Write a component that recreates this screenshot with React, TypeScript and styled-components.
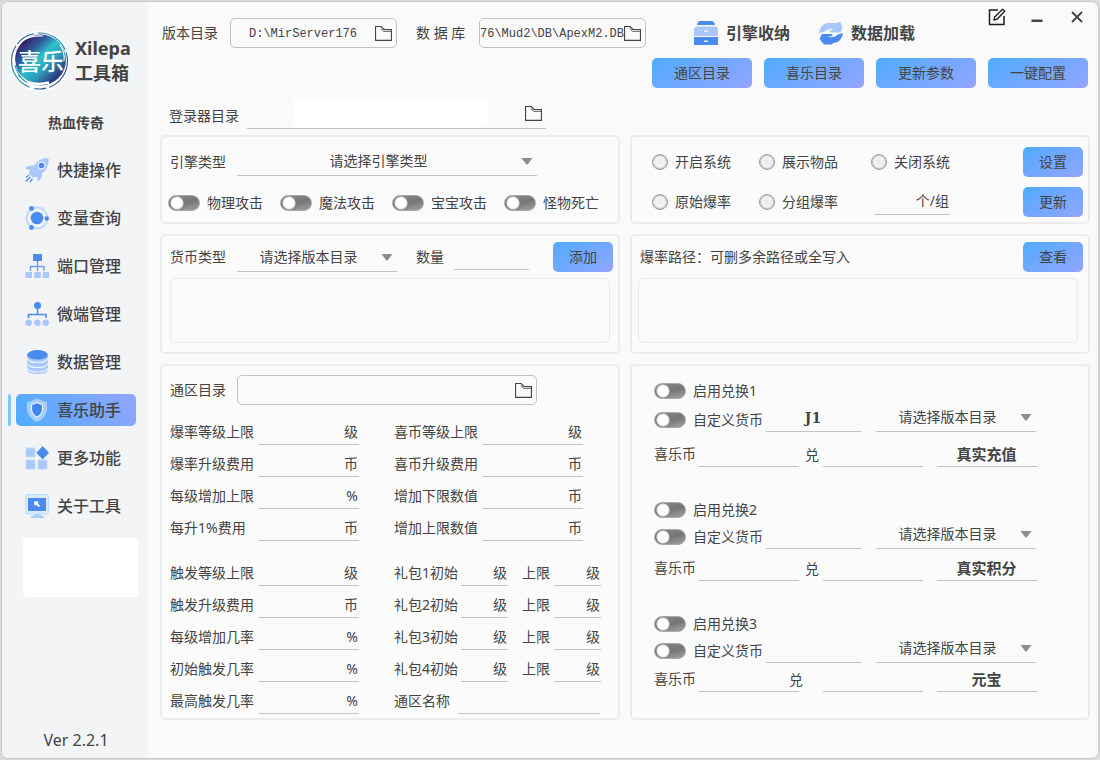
import React, { useId } from "react";
import styled, { createGlobalStyle, css } from "styled-components";

const ink = "#444444";
const line = "#c2c2c2";
const accent = "linear-gradient(150deg, #4facfe 0%, #72a8fe 50%, #93a5fe 100%)";

const GlobalStyle = createGlobalStyle`
  *, *::before, *::after { box-sizing: border-box; }
  body {
    margin: 0;
    padding: 2px;
    background: #dedede;
    color: ${ink};
    font-family: "Noto Sans", "Noto Sans CJK SC", sans-serif;
    font-size: 14px;
    line-height: 24px;
  }
  button, input, select, textarea {
    font: inherit;
    color: inherit;
    margin: 0;
    padding: 0;
    border: 0;
    background: none;
    outline-offset: 2px;
  }
  button { cursor: pointer; }
  svg { display: block; flex: none; }
`;

const Window = styled.div`
  display: flex;
  min-height: calc(100vh - 4px);
  border-radius: 6px;
  overflow: hidden;
  background: #fafafa;
  box-shadow: 0 0 2px #9a9a9a;
`;

const Sidebar = styled.aside`
  display: flex;
  flex-direction: column;
  flex: 0 0 146px;
  padding: 29px 0 6px;
  background: #f2f4f6;
`;

const Brand = styled.div`
  display: flex;
  align-items: center;
  gap: 5px;
  padding-left: 8px;
`;

const BrandName = styled.h1`
  margin: 0;
  font-size: 18px;
  line-height: 25px;
  font-weight: 700;
`;

const GameName = styled.p`
  margin: 20px 0 19px;
  padding-left: 2px;
  text-align: center;
  font-weight: 700;
`;

const Nav = styled.nav`
  display: flex;
  flex-direction: column;
  gap: 16px;
`;

const NavItem = styled.div<{ $active?: boolean }>`
  display: flex;
  gap: 5px;
  padding: 0 12px 0 6px;
  &::before {
    content: "";
    width: 3px;
    border-radius: 2px;
    background: ${(p) => (p.$active ? "#7cc8fd" : "transparent")};
  }
`;

const NavButton = styled.button<{ $active?: boolean }>`
  display: flex;
  flex: 1;
  align-items: center;
  gap: 8px;
  height: 32px;
  padding-left: 9px;
  border-radius: 5px;
  font-size: 16px;
  font-weight: 500;
  background: ${(p) =>
    p.$active ? "linear-gradient(60deg, #4facfe 0%, #6fa8fd 50%, #93a5fe 100%)" : "none"};
`;

const BlankCard = styled.div`
  height: 59px;
  margin: 16px 10px 0 21px;
  border-radius: 4px;
  background: #ffffff;
`;

const Version = styled.p`
  margin: auto 0 0;
  padding-left: 2px;
  text-align: center;
  font-size: 16px;
`;

const Main = styled.main`
  flex: 1;
  min-width: 0;
`;

const Header = styled.header`
  display: flex;
  justify-content: space-between;
`;

const PathFields = styled.div`
  display: flex;
  align-items: center;
  gap: 19px;
  height: 30px;
  margin: 16px 0 0 14px;
  white-space: nowrap;
`;

const PathField = styled.div`
  display: flex;
  align-items: center;
  gap: 12px;
`;

const PathLabel = styled.label`
  min-width: 51px;
`;

const PathBox = styled.div<{ $wide?: boolean }>`
  display: flex;
  align-items: center;
  width: ${(p) => (p.$wide ? 300 : 167)}px;
  height: 30px;
  padding-right: 4px;
  border: 1px solid ${line};
  border-radius: 5px;
`;

const PathInput = styled.input`
  flex: 1;
  min-width: 0;
  height: 26px;
  padding-top: 2px;
  text-align: center;
  font-family: "Liberation Mono", monospace;
  font-size: 12px;
`;

const IconButton = styled.button`
  display: grid;
  place-items: center;
`;

const HeaderSide = styled.div`
  display: flex;
  flex-direction: column;
  width: 446px;
`;

const HeaderTools = styled.div`
  display: flex;
  align-items: flex-start;
  height: 56px;
  padding: 0 1px 0 42px;
`;

const ToolButton = styled.button`
  display: flex;
  align-items: center;
  gap: 8px;
  height: 24px;
  margin: 19px 29px 0 0;
  font-size: 16px;
  font-weight: 700;
  white-space: nowrap;
`;

const WindowControls = styled.div`
  display: flex;
  margin-left: auto;
  & > button { width: 40px; height: 30px; }
`;

const HeaderActions = styled.div`
  display: flex;
  gap: 12px;
  padding-right: 10px;
`;

const ActionButton = styled.button<{ $small?: boolean }>`
  flex: ${(p) => (p.$small ? "0 0 60px" : "1")};
  height: 30px;
  border-radius: 5px;
  background: ${accent};
`;

const LoginRow = styled.div`
  display: flex;
  align-items: flex-end;
  gap: 8px;
  margin-top: 11px;
  padding-left: 21px;
  & > label { padding-bottom: 1px; }
`;

const LoginField = styled.div`
  display: flex;
  align-items: center;
  width: 299px;
  height: 30px;
  padding: 0 4px 1px 46px;
  justify-content: space-between;
  border-bottom: 1px solid ${line};
`;

const LoginInput = styled.input`
  width: 195px;
  height: 28px;
  border-radius: 4px;
  background: #ffffff;
`;

const Panels = styled.div`
  display: grid;
  grid-template-columns: 1fr 1fr;
  grid-template-rows: minmax(89px, auto) minmax(120px, auto) minmax(356px, auto);
  gap: 10px;
  padding: 6px 8px 38px 12px;
`;

const Panel = styled.section<{ $pad: string }>`
  padding: ${(p) => p.$pad};
  border: 2px solid #ebecec;
  border-radius: 5px;
  background: #fbfbfb;
  white-space: nowrap;
`;

const Row = styled.div<{ $gap?: number; $top?: number; $end?: boolean; $indent?: boolean }>`
  display: flex;
  align-items: ${(p) => (p.$end ? "flex-end" : "center")};
  gap: ${(p) => p.$gap ?? 0}px;
  margin-top: ${(p) => p.$top ?? 0}px;
  padding-left: ${(p) => (p.$indent ? 2 : 0)}px;
`;

const ComboBox = styled.div<{ $wide?: boolean }>`
  position: relative;
  width: ${(p) => (p.$wide ? 300 : 160)}px;
  height: 29px;
  border-bottom: 1px solid ${line};
  & > svg {
    position: absolute;
    right: 4px;
    top: 11px;
    pointer-events: none;
  }
`;

const Select = styled.select`
  appearance: none;
  width: 100%;
  height: 28px;
  padding-right: 17px;
  text-align: center;
  text-align-last: center;
`;

const SwitchInput = styled.input`
  appearance: none;
  flex: none;
  width: 32px;
  height: 16px;
  border: 1px solid #a9a9a9;
  border-radius: 8px;
  background:
    radial-gradient(circle at 8px 7px, #ffffff 0, #ffffff 5px, #dddddd 6px, #b8b8b800 7px),
    linear-gradient(165deg, #8a8a8a 0%, #767676 50%, #a2a2a2 100%);
`;

const RadioInput = styled.input`
  appearance: none;
  flex: none;
  width: 16px;
  height: 16px;
  border: 1px solid #989ca0;
  border-radius: 50%;
  background: radial-gradient(circle, #e9e9e9 0%, #f5f5f5 50%, #fbfbfb 70%);
  box-shadow: inset 0 0 1px 1px #bcc0c3;
`;

const Choice = styled.label`
  display: flex;
  align-items: center;
  gap: 7px;
`;

const RadioArea = styled.div`
  display: grid;
  grid-template-columns: 107px 112px 1fr 60px;
  row-gap: 10px;
  align-items: center;
`;

const GroupSize = styled.div`
  padding-left: 4px;
`;

const LineField = styled.div<{ $width: number }>`
  display: flex;
  align-items: center;
  flex: none;
  width: ${(p) => p.$width}px;
  height: 25px;
  padding: 0 1px 1px 0;
  border-bottom: 1px solid ${line};
`;

const LineInput = styled.input<{ $tone?: "serif" | "strong" }>`
  flex: 1;
  width: 100%;
  min-width: 0;
  height: 23px;
  text-align: center;
  ${(p) => p.$tone === "serif" && css`font: 700 14px/23px "DejaVu Serif", serif;`}
  ${(p) => p.$tone === "strong" && css`font-size: 15px; font-weight: 700;`}
`;

const Notes = styled.textarea`
  display: block;
  width: 440px;
  max-width: 100%;
  height: 65px;
  margin-top: 6px;
  border: 1px solid #e9eaeb;
  border-radius: 5px;
  resize: none;
`;

const Spread = styled.div`
  display: flex;
  align-items: center;
  gap: 19px;
  & > button { margin-left: auto; }
`;

const PathsLabel = styled.label`
  padding-left: 2px;
`;

const Columns = styled.div`
  display: flex;
  gap: 35px;
  margin-top: 8px;
`;

const Fields = styled.div`
  display: flex;
  flex-direction: column;
`;

const FieldRow = styled.div<{ $apart?: boolean }>`
  display: flex;
  align-items: flex-end;
  height: 32px;
  margin-top: ${(p) => (p.$apart ? 13 : 0)}px;
`;

const FieldLabel = styled.label<{ $width: number }>`
  flex: none;
  width: ${(p) => p.$width}px;
  padding-bottom: 1px;
`;

const Exchange = styled.fieldset`
  min-width: 0;
  margin: 0;
  padding: 0;
  border: 0;
`;

const ExchangeHead = styled.div`
  display: flex;
  align-items: center;
  height: 20px;
`;

const Stack = styled.div`
  display: flex;
  flex-direction: column;
  gap: 33px;
`;

const RateWord = styled.span<{ $early?: boolean }>`
  flex: none;
  width: 24px;
  padding-left: 6px;
  ${(p) => p.$early && css`margin-left: -16px; margin-right: 16px;`}
`;

const Tail = styled.div`
  margin-left: 14px;
`;

/* ---------- icons ---------- */

const deep = "#4a8bf0";
const pale = "#a9c7fb";

const FolderIcon = () => (
  <svg width="17" height="15" viewBox="0 0 17 15" fill="none" stroke="#444">
    <path d="M.5 14.300V.5H6l3 3h7.500v10.800z" strokeWidth="1.200" />
    <path d="M6 2.500 8.500 5.300h7.500" strokeWidth=".9" />
  </svg>
);

const CaretIcon = () => (
  <svg width="12" height="7" viewBox="0 0 12 7">
    <path d="M.5 0h11L7 6q-1 1-2 0z" fill="#8c8c8c" />
  </svg>
);

const EditIcon = () => (
  <svg width="18" height="18" viewBox="0 0 18 18" fill="none" stroke="#1c1c1c" strokeWidth="1.500">
    <path d="M10 2H1.500v14.500H16V8" />
    <path d="M6 12l.7-3L14.500 1.200l2.200 2L9 11.200z" strokeLinejoin="round" strokeWidth="1.300" />
  </svg>
);

const MinimizeIcon = () => (
  <svg width="12" height="14" viewBox="0 0 12 14">
    <path d="M.5 9.500h11v2.500H.5z" fill={ink} />
  </svg>
);

const CloseIcon = () => (
  <svg width="12" height="12" viewBox="0 0 12 12" stroke={ink} strokeWidth="1.800">
    <path d="M1 1l10 10M11 1 1 11" />
  </svg>
);

const ArchiveIcon = () => (
  <svg width="24" height="24" viewBox="0 0 24 24">
    <path d="M6 0h12q2 0 3 4H3q1-4 3-4z" fill={deep} />
    <path d="M2 5.500h20l2 2V15H0V7.500z" fill={pale} />
    <path d="M0 16h24v8H0z" fill={deep} />
    <path d="M10 9.500h4v1.500h-4zM10 19.500h4v1.500h-4z" fill="#e8f1ff" />
  </svg>
);

const ReloadIcon = () => (
  <svg width="24" height="24" viewBox="0 0 24 24">
    <path d="M0 12C1 6 4 2 10 2h8l3-1.500L23.500 6l-2 5.500H12q-1.500 0-1-2L15 8.500q-3-1-7 .5-3 2.500-8 3z" fill={pale} />
    <path d="M24 12c-1 6-4 10-10 10l-1 1.500H5L.5 18l2.500-5h8.500q2.500 0 2 2l-4.500.8q3.500 1.200 7-.3 3-3 8-3.500z" fill={deep} />
  </svg>
);

const RocketIcon = () => (
  <svg width="24" height="24" viewBox="0 0 24 24">
    <path d="M23.500.3Q16-.5 11 5L9 7.500 3 8q-2 .5-2.500 3l4.500 1-1 4 4 3.500 4-1 .5 4.500q4-1 4.500-6l-.5-1.500Q24.500 10 23.500.3z" fill={pale} />
    <circle cx="16.500" cy="7.500" r="4" fill="#e8f1ff" />
    <circle cx="16.500" cy="7.500" r="2.800" fill={deep} />
    <path d="M4 17l-3 2.500M5.500 19 .5 23.500M7.500 21l-2.500 3" stroke={deep} strokeWidth="1.200" />
  </svg>
);

const OrbitIcon = () => (
  <svg width="24" height="24" viewBox="0 0 24 24">
    <circle cx="12" cy="12" r="10.500" fill="none" stroke="#bcd9fb" strokeWidth="1.800" />
    <circle cx="12" cy="12" r="6.300" fill={deep} />
    <circle cx="6.500" cy="2.500" r="2.400" fill={deep} />
    <circle cx="21.800" cy="12.500" r="2.200" fill={deep} />
    <circle cx="6.500" cy="21.500" r="2.400" fill={deep} />
  </svg>
);

const PortIcon = () => (
  <svg width="24" height="24" viewBox="0 0 24 24">
    <path d="M8 0h9v7H8z" fill={deep} />
    <path d="M12.500 7v10M5.500 17v-4.500h13.500V17" fill="none" stroke="#6f9fe8" strokeWidth="1.400" />
    <path d="M.5 18H7v6H.5zM9.300 18h6.500v6H9.300zM17.800 18H24v6h-6.200z" fill={pale} />
  </svg>
);

const NodesIcon = () => (
  <svg width="24" height="24" viewBox="0 0 24 24">
    <circle cx="12.500" cy="3.500" r="3.500" fill={deep} />
    <path d="M12.500 7v5M3.500 16v-3.500h17.500V16" fill="none" stroke={deep} strokeWidth="1.600" />
    <g fill={pale}>
      <circle cx="3.700" cy="20.700" r="3.200" />
      <circle cx="12.500" cy="20.700" r="3.200" />
      <circle cx="20.700" cy="20.700" r="3.200" />
    </g>
  </svg>
);

const DatabaseIcon = () => (
  <svg width="24" height="24" viewBox="0 0 24 24">
    <path d="M2 5v14.500q0 4.500 10.500 4.500T23 19.500V5z" fill={pale} />
    <path
      d="M2 8q1 4.500 10.500 4.500T23 8M2 13q1 4.500 10.500 4.500T23 13M2 18q1 4 10.500 4T23 18"
      fill="none"
      stroke="#e6f0fe"
      strokeWidth="1.200"
    />
    <ellipse cx="12.500" cy="4.800" rx="10.300" ry="4.800" fill={deep} />
  </svg>
);

const ShieldIcon = () => (
  <svg width="24" height="24" viewBox="0 0 24 24">
    <path d="M12 0q4 3 10 4v8q-1 8-10 12Q3 20 2 12V4q6-1 10-4z" fill="#a6cdfb" />
    <path d="M12 4.500q2.500 1.500 5.500 2V12q-.8 4.500-5.500 7.500Q7.300 16.500 6.500 12V6.500Q9.500 6 12 4.500z" fill="#4384ee" stroke="#eef5ff" strokeWidth="1.200" />
  </svg>
);

const TilesIcon = () => (
  <svg width="24" height="24" viewBox="0 0 24 24">
    <path d="M1 2h9v9H1zM1 14h9v9H1zM13 14h9v9h-9z" fill={pale} stroke="#bcdcfb" />
    <path d="M17.700 0 24 6.700 17.700 13.500 11.200 6.700z" fill={deep} />
  </svg>
);

const MonitorIcon = () => (
  <svg width="24" height="24" viewBox="0 0 24 24">
    <rect x=".5" y=".5" width="23" height="19.500" rx="1.500" fill="#d8ebfd" stroke="#bcdffb" />
    <path d="M3 4h18v13H3z" fill={deep} />
    <path d="M9 7.500h5l-1.500 1.500 2.500 3-1.200 1.200L11 10.500 9.500 12z" fill="#ffffff" />
    <path d="M9 20.500h7v1.500h3v2H6v-2h3z" fill="#a5d0fa" />
  </svg>
);

const Logo = () => (
  <svg width="60" height="60" viewBox="0 0 60 60">
    <defs>
      <linearGradient id="logoFill" x1="0.100" y1="0.100" x2="0.850" y2="0.900">
        <stop offset="0.080" stopColor="#35246b" />
        <stop offset="0.280" stopColor="#2f5b9c" />
        <stop offset="0.480" stopColor="#2fc0cb" />
        <stop offset="0.680" stopColor="#2b9cbd" />
        <stop offset="1" stopColor="#2d2272" />
      </linearGradient>
      <linearGradient id="logoRing" x1="0" y1="0" x2="1" y2="1">
        <stop offset="0" stopColor="#4a5a96" />
        <stop offset="0.500" stopColor="#2d9db5" />
        <stop offset="1" stopColor="#33307c" />
      </linearGradient>
    </defs>
    <circle cx="30" cy="30" r="30" fill="#ffffff" />
    <circle cx="29.500" cy="30" r="28" fill="none" stroke="url(#logoRing)" strokeWidth="1.200" strokeDasharray="34 3 12 5 50 2 20 4" />
    <circle cx="30.500" cy="29" r="25.500" fill="url(#logoFill)" />
    <path d="M4 29q0 14 12 21 10 5 23 1.500" fill="none" stroke="#ffffff" strokeWidth="2.400" />
    <path d="M5 34q2 10 10 16M8 44q4 5 9 7.500" fill="none" stroke="#2a8fb5" strokeWidth="1" />
    <path d="M14 9q8-5 19-4M50 14q5 7 4 16" fill="none" stroke="#ffffff" strokeWidth="1.200" />
    <text x="31" y="39" textAnchor="middle" fontSize="23" fontWeight="500" fill="#ffffff" fontFamily='"Noto Sans CJK SC", sans-serif'>
      喜乐
    </text>
  </svg>
);

/* ---------- composed controls ---------- */

function Switch({ label }: { label: string }) {
  return (
    <Choice>
      <SwitchInput type="checkbox" role="switch" />
      {label}
    </Choice>
  );
}

function Radio({ label }: { label: string }) {
  return (
    <Choice>
      <RadioInput type="radio" name="drop-mode" />
      {label}
    </Choice>
  );
}

function Combo({ id, text, wide, name }: { id?: string; text: string; wide?: boolean; name?: string }) {
  return (
    <ComboBox $wide={wide}>
      <Select id={id} aria-label={name}>
        <option>{text}</option>
      </Select>
      <CaretIcon />
    </ComboBox>
  );
}

function Labelled({ label, labelWidth, width, unit }: { label: string; labelWidth: number; width: number; unit?: string }) {
  const id = useId();
  return (
    <>
      <FieldLabel htmlFor={id} $width={labelWidth}>{label}</FieldLabel>
      <LineField $width={width}>
        <LineInput id={id} />
        {unit}
      </LineField>
    </>
  );
}

const navItems = [
  { text: "快捷操作", Icon: RocketIcon },
  { text: "变量查询", Icon: OrbitIcon },
  { text: "端口管理", Icon: PortIcon },
  { text: "微端管理", Icon: NodesIcon },
  { text: "数据管理", Icon: DatabaseIcon },
  { text: "喜乐助手", Icon: ShieldIcon, active: true },
  { text: "更多功能", Icon: TilesIcon },
  { text: "关于工具", Icon: MonitorIcon },
];

const leftFields: [string, string][] = [
  ["爆率等级上限", "级"],
  ["爆率升级费用", "币"],
  ["每级增加上限", "%"],
  ["每升1%费用", "币"],
  ["触发等级上限", "级"],
  ["触发升级费用", "币"],
  ["每级增加几率", "%"],
  ["初始触发几率", "%"],
  ["最高触发几率", "%"],
];

const coinFields: [string, string][] = [
  ["喜币等级上限", "级"],
  ["喜币升级费用", "币"],
  ["增加下限数值", "币"],
  ["增加上限数值", "币"],
];

const exchanges = [
  { coin: "J1", target: "真实充值", coinGap: 2, rateGap: 10 },
  { coin: "", target: "真实积分", coinGap: 0, rateGap: 7 },
  { coin: "", target: "元宝", coinGap: 0, rateGap: 4, early: true },
];

export default function App() {
  return (
    <>
      <GlobalStyle />
      <Window>
        <Sidebar>
          <Brand>
            <Logo />
            <BrandName>
              Xilepa
              <br />
              工具箱
            </BrandName>
          </Brand>
          <GameName>热血传奇</GameName>
          <Nav>
            {navItems.map(({ text, Icon, active }) => (
              <NavItem key={text} $active={active}>
                <NavButton $active={active} aria-current={active ? "page" : undefined}>
                  <Icon />
                  {text}
                </NavButton>
              </NavItem>
            ))}
          </Nav>
          <BlankCard />
          <Version>Ver 2.2.1</Version>
        </Sidebar>

        <Main>
          <Header>
            <PathFields>
              <PathField>
                <PathLabel htmlFor="version-dir">版本目录</PathLabel>
                <PathBox>
                  <PathInput id="version-dir" defaultValue="D:\MirServer176" />
                  <IconButton aria-label="选择版本目录"><FolderIcon /></IconButton>
                </PathBox>
              </PathField>
              <PathField>
                <PathLabel htmlFor="database">数 据 库</PathLabel>
                <PathBox>
                  <PathInput id="database" defaultValue="76\Mud2\DB\ApexM2.DB" />
                  <IconButton aria-label="选择数据库"><FolderIcon /></IconButton>
                </PathBox>
              </PathField>
            </PathFields>
            <HeaderSide>
              <HeaderTools>
                <ToolButton><ArchiveIcon />引擎收纳</ToolButton>
                <ToolButton><ReloadIcon />数据加载</ToolButton>
                <WindowControls>
                  <IconButton aria-label="编辑"><EditIcon /></IconButton>
                  <IconButton aria-label="最小化"><MinimizeIcon /></IconButton>
                  <IconButton aria-label="关闭"><CloseIcon /></IconButton>
                </WindowControls>
              </HeaderTools>
              <HeaderActions>
                <ActionButton>通区目录</ActionButton>
                <ActionButton>喜乐目录</ActionButton>
                <ActionButton>更新参数</ActionButton>
                <ActionButton>一键配置</ActionButton>
              </HeaderActions>
            </HeaderSide>
          </Header>

          <LoginRow>
            <label htmlFor="login-dir">登录器目录</label>
            <LoginField>
              <LoginInput id="login-dir" />
              <IconButton aria-label="选择登录器目录"><FolderIcon /></IconButton>
            </LoginField>
          </LoginRow>

          <Panels>
            <Panel $pad="10px 6px 0">
              <Row $gap={11} $indent>
                <label htmlFor="engine">引擎类型</label>
                <Combo id="engine" text="请选择引擎类型" wide />
              </Row>
              <Row $gap={17} $top={15}>
                <Switch label="物理攻击" />
                <Switch label="魔法攻击" />
                <Switch label="宝宝攻击" />
                <Switch label="怪物死亡" />
              </Row>
            </Panel>

            <Panel $pad="10px 5px 0 20px">
              <RadioArea>
                <Radio label="开启系统" />
                <Radio label="展示物品" />
                <Radio label="关闭系统" />
                <ActionButton $small>设置</ActionButton>
                <Radio label="原始爆率" />
                <Radio label="分组爆率" />
                <GroupSize>
                  <LineField $width={75}>
                    <LineInput aria-label="每组个数" />
                    个/组
                  </LineField>
                </GroupSize>
                <ActionButton $small>更新</ActionButton>
              </RadioArea>
            </Panel>

            <Panel $pad="6px 5px 0 8px">
              <Spread>
                <Row $gap={11}>
                  <label htmlFor="currency">货币类型</label>
                  <Combo id="currency" text="请选择版本目录" />
                </Row>
                <Row $gap={10}>
                  <label htmlFor="amount">数量</label>
                  <LineField $width={75}><LineInput id="amount" /></LineField>
                </Row>
                <ActionButton $small>添加</ActionButton>
              </Spread>
              <Notes aria-label="货币列表" />
            </Panel>

            <Panel $pad="6px 5px 0 6px">
              <Spread>
                <PathsLabel htmlFor="drop-paths">爆率路径：可删多余路径或全写入</PathsLabel>
                <ActionButton $small>查看</ActionButton>
              </Spread>
              <Notes id="drop-paths" />
            </Panel>

            <Panel $pad="9px 8px 3px">
              <Row $gap={11}>
                <label htmlFor="shared-dir">通区目录</label>
                <PathBox $wide>
                  <PathInput id="shared-dir" />
                  <IconButton aria-label="选择通区目录"><FolderIcon /></IconButton>
                </PathBox>
              </Row>
              <Columns>
                <Fields>
                  {leftFields.map(([label, unit], i) => (
                    <FieldRow key={label} $apart={i === 4}>
                      <Labelled label={label} unit={unit} labelWidth={89} width={100} />
                    </FieldRow>
                  ))}
                </Fields>
                <Fields>
                  {coinFields.map(([label, unit]) => (
                    <FieldRow key={label}>
                      <Labelled label={label} unit={unit} labelWidth={89} width={100} />
                    </FieldRow>
                  ))}
                  {[1, 2, 3, 4].map((n) => (
                    <FieldRow key={n} $apart={n === 1}>
                      <Row $gap={14} $end>
                        <Row $end><Labelled label={`礼包${n}初始`} unit="级" labelWidth={67} width={47} /></Row>
                        <Row $end><Labelled label="上限" unit="级" labelWidth={32} width={47} /></Row>
                      </Row>
                    </FieldRow>
                  ))}
                  <FieldRow>
                    <Labelled label="通区名称" labelWidth={64} width={142} />
                  </FieldRow>
                </Fields>
              </Columns>
            </Panel>

            <Panel $pad="15px 20px 0 22px">
              <Stack>
                {exchanges.map(({ coin, target, coinGap, rateGap, early }, i) => (
                  <Exchange key={target} aria-label={`兑换${i + 1}`}>
                    <ExchangeHead><Switch label={`启用兑换${i + 1}`} /></ExchangeHead>
                    <Row $top={coinGap} $gap={15} $end>
                      <Row $gap={3}>
                        <Switch label="自定义货币" />
                        <LineField $width={95}>
                          <LineInput $tone="serif" defaultValue={coin} aria-label="货币名称" />
                        </LineField>
                      </Row>
                      <Combo text="请选择版本目录" name="版本目录" />
                    </Row>
                    <Row $top={rateGap}>
                      <Labelled label="喜乐币" labelWidth={45} width={100} />
                      <RateWord $early={early}>兑</RateWord>
                      <LineField $width={100}><LineInput aria-label="兑换数量" /></LineField>
                      <Tail>
                        <LineField $width={100}>
                          <LineInput $tone="strong" defaultValue={target} aria-label="兑换目标" />
                        </LineField>
                      </Tail>
                    </Row>
                  </Exchange>
                ))}
              </Stack>
            </Panel>
          </Panels>
        </Main>
      </Window>
    </>
  );
}
